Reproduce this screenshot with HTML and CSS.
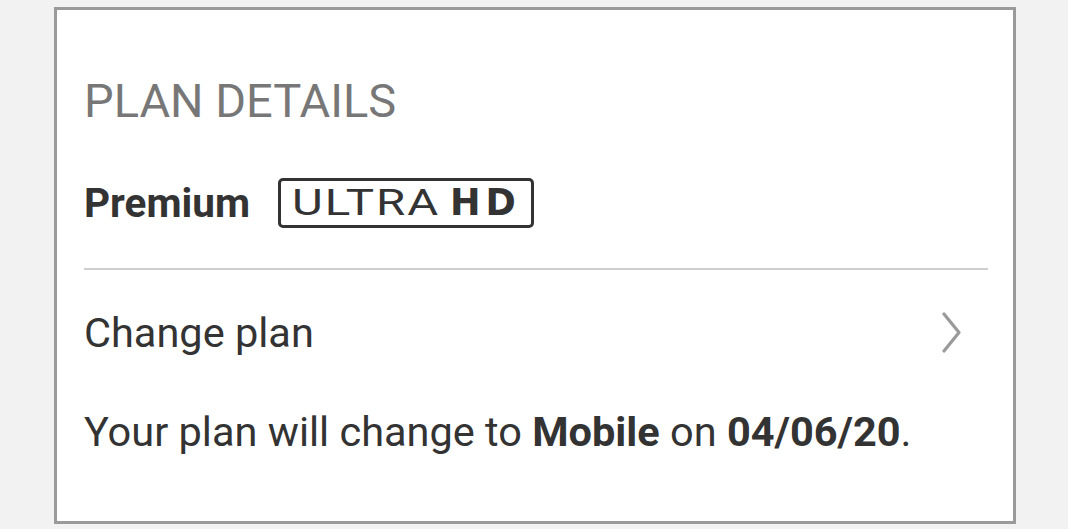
FILE: index.html
```html
<!DOCTYPE html>
<html>
<head>
<meta charset="utf-8">
<link rel="stylesheet" href="styles.css">
</head>
<body>
<div class="card">
  <div class="title">PLAN DETAILS</div>
  <div class="plan">
    <span class="plan-name">Premium</span>
    <span class="badge"><span class="ultra"><span class="ultra-text">ULTRA</span></span><span class="hd">HD</span></span>
  </div>
  <div class="divider"></div>
  <div class="change-row">
    <span class="change-text">Change plan</span>
    <svg class="chevron" width="22" height="41" viewBox="0 0 22 41"><path d="M3 2 L18 20.5 L3 39" fill="none" stroke="#9a9a9a" stroke-width="3.2" stroke-linecap="round" stroke-linejoin="round"/></svg>
  </div>
  <div class="note">Your plan will change to <b>Mobile</b> on <b>04/06/20</b>.</div>
</div>
</body>
</html>
```
FILE: styles.css
```css
html, body {
  margin: 0;
  padding: 0;
  background: #f2f2f2;
}
body {
  font-family: Roboto, "Liberation Sans", sans-serif;
  color: #333;
}
.card {
  box-sizing: border-box;
  margin: 7px 0 0 54px;
  width: 962px;
  height: 517px;
  background: #fff;
  border: 3px solid #9a9a9a;
  padding: 65px 25px 0 27px;
}
.title {
  font-size: 47px;
  line-height: 52px;
  color: #777;
}
.plan {
  display: flex;
  align-items: center;
  gap: 28px;
  margin-top: 51px;
  height: 50px;
}
.plan-name {
  font-size: 40.5px;
  font-weight: 700;
  color: #333;
}
.badge {
  display: flex;
  align-items: center;
  box-sizing: border-box;
  width: 256px;
  height: 50px;
  border: 3px solid #333;
  border-radius: 5px;
  padding: 0 0 0 11px;
  color: #333;
}
.ultra {
  display: block;
  width: 146px;
  margin-right: 12px;
  height: 40px;
}
.ultra-text {
  display: block;
  font-family: Roboto, sans-serif;
  font-weight: 400;
  font-size: 36.5px;
  line-height: 40px;
  letter-spacing: 1.5px;
  white-space: nowrap;
  transform: scaleX(1.3);
  transform-origin: left center;
}
.hd {
  display: block;
  font-family: "DejaVu Sans", sans-serif;
  font-weight: 700;
  font-size: 36.5px;
  letter-spacing: 5px;
  line-height: 40px;
}
.divider {
  margin-top: 40px;
  height: 2px;
  background: #cfcfcf;
}
.change-row {
  display: flex;
  align-items: center;
  justify-content: space-between;
  margin-top: 37px;
  height: 50px;
  padding-right: 25px;
}
.change-text {
  font-size: 41.5px;
}
.chevron {
  display: block;
}
.note {
  margin-top: 50px;
  font-size: 41.5px;
  line-height: 50px;
}
.note b {
  font-weight: 700;
}
```
